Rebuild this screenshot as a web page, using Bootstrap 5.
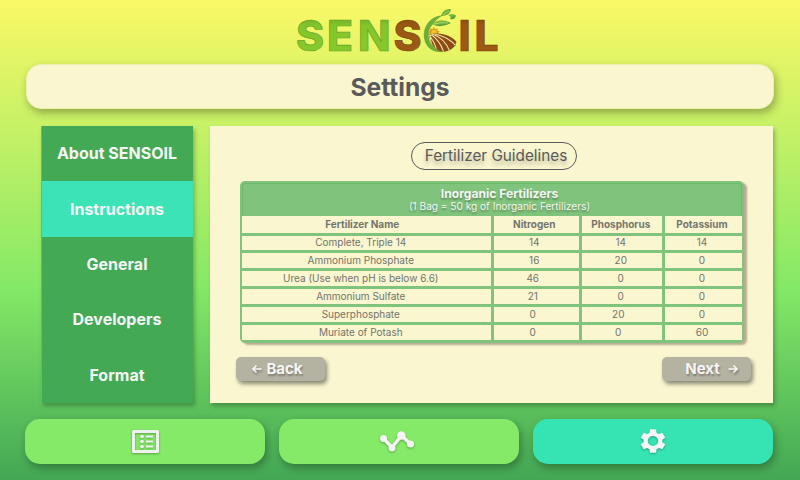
<!DOCTYPE html>
<html lang="en">
<head>
<meta charset="utf-8">
<meta name="viewport" content="width=device-width, initial-scale=1">
<title>SENSOIL Settings</title>
<link href="https://cdn.jsdelivr.net/npm/bootstrap@5.3.0/dist/css/bootstrap.min.css" rel="stylesheet">
<style>
body{font-family:Inter,sans-serif;width:800px;height:480px;overflow:hidden;background:linear-gradient(180deg,#fbf866 0%,#84e966 60%,#43a755 100%);color:#5a5a5a}
.logo{height:64px}
.logo svg{display:block;margin-left:290px}
.title-bar{margin:0 26px;height:45px;border-radius:15px;background:#f9f6d0;box-shadow:2px 4px 8px rgba(0,0,0,.3);font-size:24.6px;font-weight:700;line-height:45px;border:1px solid #eaf0ae;padding-top:1px}
.main-row{margin:17px 27px 0 41px;gap:17px;height:276.500px}
.side{width:152px;background:#44a955;box-shadow:2px 3px 4px rgba(0,0,0,.25);border-left:1px solid #6cba58}
.side a{flex:1;color:#f5f5f5;font-weight:700;font-size:16px;text-decoration:none;padding-bottom:.6px;padding-right:1px}
.side a.on{background:#3ce3b6}
.panel{flex:1;background:#f9f6d0;box-shadow:2px 3px 4px rgba(0,0,0,.25);padding:16px 21px 0 25px}
.pill{width:166px;height:28px;border:1px solid #5a5a5a;border-radius:14px;font-size:15.3px;line-height:26px;text-shadow:0 4px 4px rgba(0,0,0,.25);margin-left:176px;padding-left:4px;white-space:nowrap}
.fert{width:504px;margin:11px 0 0 5px;padding:2px 2px 2.5px;border-radius:5px;background:#80c37c;box-shadow:3px 2px 2px rgba(90,60,50,.4)}
.fert-head{height:33px;color:#f5f5f5;text-shadow:0 2px 2px rgba(0,0,0,.3);font-size:12.1px;line-height:13px;padding-top:3px;padding-left:15px;border:1px solid #6dba6f;border-bottom:0;border-radius:3px 3px 0 0}
.fert-head b{display:block}
.fert-head span{display:block;font-size:10.1px;line-height:12px}
.fert-grid{display:grid;grid-template-columns:248.5px 84.5px 79.5px 77px;grid-template-rows:17px 14px repeat(5,15px);gap:3px 3.5px;font-size:10px;color:#74746a}
.fert-grid>*{background:#f9f6d0;display:flex;align-items:center;justify-content:center;line-height:12px;padding:0 4px 1.500px 0}
.fert-grid>:nth-child(4n+1){padding-right:11px}
.fert-grid>b:nth-child(4n+1){padding-right:8px}
.fert-grid>:nth-child(4n){padding-right:3px}
.fert-grid>:nth-child(4n+3){padding-right:2px}
.fert-grid b{color:#75756c;font-weight:700}
.fert-grid .sx.sx{padding-right:7px}
.step{width:89px;height:24px;border-radius:5px;background:#b4b2a1;color:#f5f5f5;font-weight:700;font-size:15px;line-height:24px;box-shadow:2px 3px 4px rgba(0,0,0,.45);text-shadow:1px 2px 2px rgba(0,0,0,.3);padding:0 6px 0 0}
.steps{margin:14px 1px 0 1px}
.step.fwd{padding:0 0 0 10px}
.step svg{filter:drop-shadow(1px 2px 1px rgba(0,0,0,.3))}
.tabs{margin:16px 27px 0 25px;gap:14px}
.tabs a{flex:1;height:45px;border-radius:15px;background:#84ea67;box-shadow:2px 4px 8px rgba(0,0,0,.3)}
.tabs a.on{background:#36e4b3}
.tabs svg{filter:drop-shadow(0 1.5px 1px rgba(0,0,0,.3))}
.tabs .trend{margin-right:4px}
</style>
</head>
<body>
<header class="logo">
<svg width="215" height="60" viewBox="290 0 215 60" role="img" aria-label="SENSOIL">
<defs>
<linearGradient id="gr" x1="0" y1="0" x2="0" y2="1"><stop offset="0" stop-color="#5e9426"/><stop offset=".3" stop-color="#82c629"/><stop offset="1" stop-color="#86ca2c"/></linearGradient>
<linearGradient id="br" x1="0" y1="0" x2="0" y2="1"><stop offset="0" stop-color="#76420f"/><stop offset=".3" stop-color="#9a5813"/><stop offset="1" stop-color="#9e5b14"/></linearGradient>
<linearGradient id="leaf" x1="0" y1="0" x2="1" y2="1"><stop offset="0" stop-color="#9dd047"/><stop offset="1" stop-color="#3f8a2c"/></linearGradient>
<clipPath id="field"><path d="M429 35C440 31 452 36 456.500 42C454 49 448 52 442 51.500C435 50 430 43 429 35Z"/></clipPath>
</defs>
<g font-family="Inter,sans-serif" font-weight="800" font-size="42.500" stroke-width=".7">
<text x="296 327 358" y="51" fill="url(#gr)" stroke="#6ba32a">SEN</text>
<text x="393.500" y="51" fill="url(#br)" stroke="#7b4510">S</text>
<text x="458.500 474.500" y="51" fill="url(#br)" stroke="#7b4510">IL</text>
</g>
<path d="M440 16C421 19 419 46 435 51Q446 54 456 45Q447 51 438 48.500C423 44 427 23 440 16Z" fill="#6fad37" stroke="#4c9733" stroke-width=".5"/>
<path d="M430 27Q438 15 448 13" fill="none" stroke="#6cae35" stroke-width="1.200"/>
<path d="M441 16Q443 8 451 9Q450 16 441 16Z" fill="url(#leaf)"/>
<path d="M448 15Q451 13 456 15.500Q455 20 450 19Q452 17 448 15Z" fill="url(#leaf)"/>
<path d="M432 24Q440 17 451 23Q440 29 432 24Z" fill="url(#leaf)"/>
<path d="M434 24Q441 22 448 23M443 15L449 11" fill="none" stroke="#c9e77d" stroke-width=".7"/>
<path d="M434 27l1.200 2.200 2.500-1-.4 2.500 2.600.5-2 1.700 1.800 2H428l1.800-2-2-1.700 2.600-.5-.4-2.500 2.500 1Z" fill="#d99b1d"/>
<circle cx="434" cy="32.500" r="2.700" fill="#f2c52e"/>
<g clip-path="url(#field)"><path d="M427 30H460V54H427Z" fill="#8e4a17"/>
<path d="M429 35Q435 42 437 52M430 34Q440 40 444 53M432 34Q445 38 450 52M435 34Q449 37 457 47M430 35Q431 42 432 50" fill="none" stroke="#eee9a0" stroke-width="1.100"/></g>
</svg>
</header>
<h1 class="title-bar text-center d-flex align-items-center justify-content-center mb-0">Settings</h1>
<main class="main-row d-flex">
<nav class="side d-flex flex-column">
<a class="d-flex align-items-center justify-content-center" href="#">About SENSOIL</a>
<a class="on d-flex align-items-center justify-content-center" href="#">Instructions</a>
<a class="d-flex align-items-center justify-content-center" href="#">General</a>
<a class="d-flex align-items-center justify-content-center" href="#">Developers</a>
<a class="d-flex align-items-center justify-content-center" href="#">Format</a>
</nav>
<section class="panel">
<div class="pill text-center">Fertilizer Guidelines</div>
<div class="fert">
<div class="fert-head text-center"><b>Inorganic Fertilizers</b><span>(1 Bag = 50 kg of Inorganic Fertilizers)</span></div>
<div class="fert-grid">
<b>Fertilizer Name</b><b>Nitrogen</b><b>Phosphorus</b><b>Potassium</b>
<span>Complete, Triple 14</span><span>14</span><span>14</span><span>14</span>
<span>Ammonium Phosphate</span><span>16</span><span>20</span><span>0</span>
<span>Urea (Use when pH is below 6.6)</span><span class="sx">46</span><span>0</span><span>0</span>
<span>Ammonium Sulfate</span><span class="sx">21</span><span>0</span><span>0</span>
<span>Superphosphate</span><span class="sx">0</span><span class="sx">20</span><span>0</span>
<span>Muriate of Potash</span><span class="sx">0</span><span class="sx">0</span><span>60</span>
</div>
</div>
<div class="steps d-flex justify-content-between">
<button class="step btn d-flex align-items-center justify-content-center gap-1 border-0"><svg width="10" height="10" viewBox="0 0 10 10" fill="none" stroke="#f5f5f5" stroke-width="1.600"><path d="M9.500 5H1.500M4.500 1.500L1 5l3.500 3.500"/></svg>Back</button>
<button class="step fwd btn d-flex align-items-center justify-content-center gap-2 border-0">Next<svg width="10" height="10" viewBox="0 0 10 10" fill="none" stroke="#f5f5f5" stroke-width="1.600"><path d="M.5 5h8M5.500 1.500L9 5 5.500 8.500"/></svg></button>
</div>
</section>
</main>
<footer class="tabs d-flex">
<a class="d-flex align-items-center justify-content-center" href="#" aria-label="Records"><svg width="27" height="23" viewBox="0 0 27 23"><path d="M1.500 1.500h24v20h-24z" fill="none" stroke="#f0f0f0" stroke-width="3" stroke-linejoin="round"/><path d="M8.500 6.500h3M14 6.500h7M8.500 11.500h3M14 11.500h7M8.500 16.500h3M14 16.500h7" stroke="#f0f0f0" stroke-width="2.200"/><circle cx="10" cy="6.500" r="1.700" fill="#f0f0f0"/><circle cx="10" cy="11.500" r="1.700" fill="#f0f0f0"/><circle cx="10" cy="16.500" r="1.700" fill="#f0f0f0"/></svg></a>
<a class="d-flex align-items-center justify-content-center" href="#" aria-label="Trends"><svg class="trend" width="34" height="21" viewBox="0 0 34 21" fill="#f5f5f5"><path d="M3.500 7.500L12 16.500 21.500 4.500 30.500 13" fill="none" stroke="#f5f5f5" stroke-width="3.400"/><circle cx="3.600" cy="7.500" r="3.500"/><circle cx="12" cy="17" r="3.400"/><circle cx="21.300" cy="4.500" r="4.300"/><circle cx="30.500" cy="13" r="3.500"/></svg></a>
<a class="on d-flex align-items-center justify-content-center" href="#" aria-label="Settings"><svg width="30" height="28" viewBox="0 0 24 24" preserveAspectRatio="none"><path fill="#f5f5f5" d="M19.430 12.980c.04-.32.07-.64.07-.98s-.03-.66-.07-.98l2.110-1.650c.19-.15.24-.42.12-.64l-2-3.460c-.12-.22-.39-.3-.61-.22l-2.490 1c-.52-.4-1.080-.73-1.690-.98l-.38-2.650C14.460 2.180 14.250 2 14 2h-4c-.25 0-.46.18-.49.42l-.38 2.650c-.61.25-1.170.59-1.690.98l-2.490-1c-.23-.09-.49 0-.61.22l-2 3.460c-.13.22-.07.49.12.64l2.110 1.650c-.04.32-.07.65-.07.98s.03.66.07.98l-2.110 1.650c-.19.15-.24.42-.12.64l2 3.460c.12.22.39.3.61.22l2.490-1c.52.4 1.080.73 1.690.98l.38 2.650c.03.24.24.42.49.42h4c.25 0 .46-.18.49-.42l.38-2.650c.61-.25 1.170-.59 1.690-.98l2.490 1c.23.09.49 0 .61-.22l2-3.460c.12-.22.07-.49-.12-.64l-2.110-1.650zM12 16.200a4.200 4.200 0 1 1 0-8.400 4.200 4.200 0 0 1 0 8.400z"/></svg></a>
</footer>
<script src="https://cdn.jsdelivr.net/npm/bootstrap@5.3.0/dist/js/bootstrap.bundle.min.js"></script>
</body>
</html>
